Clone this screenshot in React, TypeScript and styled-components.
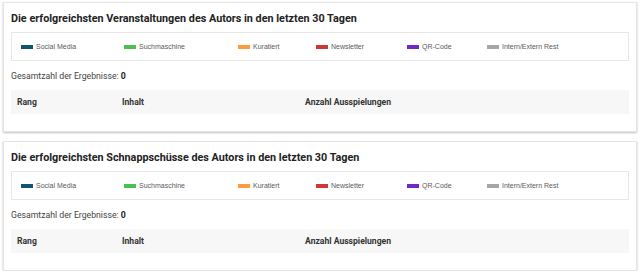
import React from "react";
import styled, { createGlobalStyle } from "styled-components";

const Global = createGlobalStyle`
  html, body { margin: 0; padding: 0; background: #ffffff; }
  body { font-family: Roboto, "Liberation Sans", Arial, sans-serif; color: #333; }
`;

const Page = styled.div`
  display: flex;
  flex-direction: column;
  gap: 9px;
  padding: 2px 3px 0 3px;
  width: 640px;
  box-sizing: border-box;
`;

const Card = styled.section`
  background: #fff;
  border: 1px solid #e4e4e4;
  box-shadow: 0 1px 2px rgba(0, 0, 0, 0.25);
  padding: 9px 7px 17px 7px;
  display: flex;
  flex-direction: column;
`;

const Title = styled.h2`
  margin: 0;
  font-size: 10.8px;
  font-weight: 700;
  line-height: 14px;
  color: #222;
`;

const Legend = styled.div`
  margin-top: 6px;
  border: 1px solid #e6e6e6;
  height: 27px;
  display: flex;
  align-items: center;
  padding-left: 9px;
`;

const LegendItem = styled.div<{ $w: number }>`
  display: flex;
  align-items: center;
  width: ${(p) => p.$w}px;
  flex: none;
  font-family: "Liberation Sans", Arial, sans-serif;
  font-size: 7px;
  color: #5a5a5a;
`;

const Swatch = styled.span<{ $c: string }>`
  display: inline-block;
  width: 12px;
  height: 4px;
  background: ${(p) => p.$c};
  margin-right: 3px;
`;

const Total = styled.div`
  margin-top: 9px;
  font-size: 8.7px;
  line-height: 12px;
  color: #444;
  b { color: #222; }
`;

const TableHead = styled.div`
  margin-top: 8px;
  height: 24px;
  background: #f7f7f7;
  display: grid;
  grid-template-columns: 105px 183px 1fr;
  align-items: center;
  padding-left: 6px;
  font-size: 8.6px;
  font-weight: 700;
  color: #333;
`;

const legend = [
  { label: "Social Media", color: "#0e5570", w: 103 },
  { label: "Suchmaschine", color: "#4cbf52", w: 114 },
  { label: "Kuratiert", color: "#ff9a3e", w: 78 },
  { label: "Newsletter", color: "#cf3636", w: 91 },
  { label: "QR-Code", color: "#7128c8", w: 80 },
  { label: "Intern/Extern Rest", color: "#a6a6a6", w: 100 },
];

function Panel({ title }: { title: string }) {
  return (
    <Card>
      <Title>{title}</Title>
      <Legend>
        {legend.map((l) => (
          <LegendItem key={l.label} $w={l.w}>
            <Swatch $c={l.color} />
            {l.label}
          </LegendItem>
        ))}
      </Legend>
      <Total>
        Gesamtzahl der Ergebnisse: <b>0</b>
      </Total>
      <TableHead>
        <span>Rang</span>
        <span>Inhalt</span>
        <span>Anzahl Ausspielungen</span>
      </TableHead>
    </Card>
  );
}

export default function App() {
  return (
    <>
      <Global />
      <Page>
        <Panel title="Die erfolgreichsten Veranstaltungen des Autors in den letzten 30 Tagen" />
        <Panel title="Die erfolgreichsten Schnappschüsse des Autors in den letzten 30 Tagen" />
      </Page>
    </>
  );
}
